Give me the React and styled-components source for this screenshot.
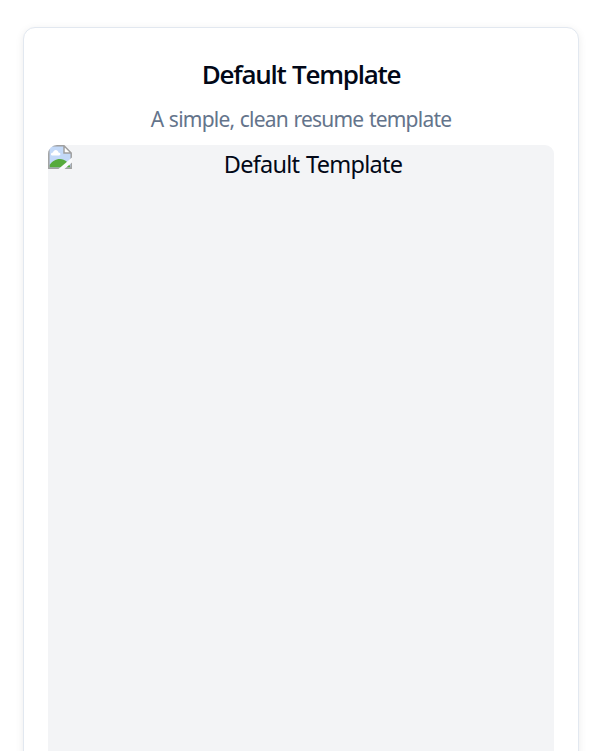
import React from 'react';
import styled, { createGlobalStyle } from 'styled-components';

const GlobalStyle = createGlobalStyle`
  *, *::before, *::after { box-sizing: border-box; }
  body {
    margin: 0;
    background: #fff;
    color: #020817;
    font-family: "Noto Sans", "Open Sans", sans-serif;
    overflow: hidden;
  }
`;

const Page = styled.main`
  height: 751px;
  padding: 27px 34px 0 23px;
  overflow: hidden;
`;

const Card = styled.article`
  height: 900px;
  padding: 0 24px 24px;
  display: flex;
  flex-direction: column;
  border: 1px solid #e2e8f0;
  border-radius: 12px;
  background: #fff;
  box-shadow: 0 2px 9px rgba(0, 0, 0, 0.08);
`;

const CardHeader = styled.header`
  height: 117px;
  padding-top: 28px;
  display: flex;
  flex-direction: column;
  align-items: center;
`;

const Title = styled.h3`
  margin: 0;
  font-family: "Open Sans", "Noto Sans", sans-serif;
  font-size: 26px;
  font-weight: 600;
  line-height: 36px;
  letter-spacing: -1.25px;
  word-spacing: 1px;
  white-space: nowrap;
`;

const Description = styled.p`
  margin: 11px 0 0;
  color: #64748b;
  font-size: 21px;
  line-height: 32px;
  letter-spacing: -0.78px;
  word-spacing: 0.8px;
  white-space: nowrap;
`;

const Preview = styled.div`
  flex: 1;
  display: flex;
  align-items: flex-start;
  border-radius: 9px;
  background: #f3f4f6;
  overflow: hidden;
`;

const MissingImage = styled.svg`
  width: 24px;
  height: 24px;
  flex: none;
`;

const AltText = styled.span`
  flex: 1;
  padding-top: 1px;
  font-size: 23.5px;
  line-height: 36px;
  letter-spacing: -0.75px;
  word-spacing: 1.5px;
  text-align: center;
  white-space: nowrap;
`;

export default function App() {
  return (
    <Page>
      <GlobalStyle />
      <Card>
        <CardHeader>
          <Title>Default Template</Title>
          <Description>A simple, clean resume template</Description>
        </CardHeader>
        <Preview>
          <MissingImage viewBox="0 0 24 24" aria-hidden="true">
            <path d="M.8.8H16L23.2 8V23.2H.8Z" fill="#c3d9f8" />
            <path d="M4 10.5C2.5 10.5 2.5 7.5 5 7.5C5.5 4 10 4 10.5 7.5C13 7.5 13 10.5 11 10.5Z" fill="#fff" />
            <path d="M1.5 22.5V20C4 16.5 7.5 14 12 14C17 14 21 18 22.5 22.5Z" fill="#55aa3c" />
            <path d="M16 1V8H23Z" fill="#fff" />
            <path d="M.8.8H16L23.2 8V23.2H.8ZM16 .8V8H23.2" fill="none" stroke="#a0a0a0" strokeWidth="1.5" />
            <path d="M10.5 24L24 12.5V17.5L16.5 24Z" fill="#f8f9fb" />
          </MissingImage>
          <AltText>Default Template</AltText>
        </Preview>
      </Card>
    </Page>
  );
}
